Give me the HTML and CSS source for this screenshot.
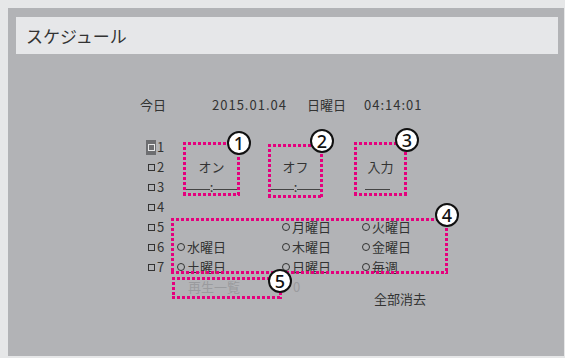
FILE: index.html
```html
<!DOCTYPE html>
<html lang="ja">
<head>
  <meta charset="UTF-8" />
  <meta name="viewport" content="width=device-width,initial-scale=1.0" />
  <title>スケジュール</title>
  <link rel="stylesheet" href="styles.css">
</head>
<body>
  <div class="panel">
    <div class="titlebar">スケジュール</div>

    <div class="today">
      <span>今日</span>
      <span class="num">2015.01.04</span>
      <span>日曜日</span>
      <span class="num">04:14:01</span>
    </div>

    <div class="sched">
      <ul class="slots">
        <li class="on"><i></i>1</li>
        <li><i></i>2</li>
        <li><i></i>3</li>
        <li><i></i>4</li>
        <li><i></i>5</li>
        <li><i></i>6</li>
        <li><i></i>7</li>
      </ul>

      <div class="detail">
        <div class="fields">
          <div class="field f1">
            <span>オン</span>
            <span class="time"><i></i>:<i></i></span>
          </div>
          <div class="field f2">
            <span>オフ</span>
            <span class="time"><i></i>:<i></i></span>
          </div>
          <div class="field f3">
            <span>入力</span>
            <span class="time"><i></i></span>
          </div>
        </div>

        <div class="days">
          <span></span>
          <span class="day">月曜日</span>
          <span class="day">火曜日</span>
          <span class="day">水曜日</span>
          <span class="day">木曜日</span>
          <span class="day">金曜日</span>
          <span class="day">土曜日</span>
          <span class="day">日曜日</span>
          <span class="day">毎週</span>
        </div>

        <div class="foot">
          <span class="muted list">再生一覧</span>
          <span class="muted count">0</span>
          <span class="clear">全部消去</span>
        </div>
      </div>
    </div>

    <!-- callouts -->
    <div class="mark m1"></div>
    <div class="mark m2"></div>
    <div class="mark m3"></div>
    <div class="mark m4"></div>
    <div class="mark m5"></div>
    <div class="badge b1">1</div>
    <div class="badge b2">2</div>
    <div class="badge b3">3</div>
    <div class="badge b4">4</div>
    <div class="badge b5">5</div>
  </div>
</body>
</html>
```

FILE: styles.css
```css
body{
  margin:0;
  background:#e6e7e8;
  font-family:"Noto Sans CJK JP","Noto Sans",sans-serif;
  color:#333;
}
.panel{
  position:relative;box-sizing:border-box;
  margin:8px 1px 0 8px;height:348px;padding-top:9px;
  background:#b2b3b6;overflow:hidden;
}
.titlebar{
  margin:0 6px 0 8px;height:37px;padding-left:10px;
  background:#e6e7e9;font-size:17px;line-height:37px;
}

/* ---------- today ---------- */
.today{
  display:grid;grid-template-columns:72px 95px 57px auto;
  margin:41px 0 0 132px;font-size:13px;line-height:20px;
}
.num{letter-spacing:1px;}

/* ---------- schedule ---------- */
.sched{display:flex;margin:22px 0 0 138px;font-size:13px;line-height:20px;}
.slots{list-style:none;margin:0;padding:0;width:31px;}
.slots li{display:flex;align-items:center;height:20px;}
.slots i{
  display:flex;align-items:center;justify-content:center;
  width:10px;height:15px;margin-right:1px;
}
.slots i::before{
  content:"";width:7px;height:7px;box-sizing:border-box;
  border:1.5px solid #333;
}
.slots li.on i{background:#6d6e71;}
.slots li.on i::before{border-color:#e6e7e8;}

.fields{display:flex;margin:20px 0 20px 6px;}
.field{display:flex;flex-direction:column;align-items:center;}
.f1{width:57px;}
.f2{width:55px;margin-left:28px;}
.f3{width:53px;margin-left:31px;}
.time{display:flex;align-items:center;justify-content:center;width:100%;height:20px;}
.time i{flex:1;height:4px;border-bottom:1px solid #444;}
.f3 .time i{flex:none;width:25px;margin-left:-6px;}

.days,.foot{display:grid;grid-template-columns:105px 80px auto;grid-auto-rows:20px;}
.day{display:flex;align-items:center;}
.day::before{
  content:"";width:8px;height:8px;box-sizing:border-box;
  border:1.3px solid #333;border-radius:50%;margin-right:2px;
}
.muted{color:#9a9b9e;}
.list,.count{padding-left:11px;}
.clear{padding-left:12px;margin-top:12px;}

/* ---------- callouts ---------- */
.mark{
  position:absolute;box-sizing:border-box;
  --dots-h:repeating-linear-gradient(90deg,#e5007d 0 3px,transparent 3px 5px);
  --dots-v:repeating-linear-gradient(180deg,#e5007d 0 3px,transparent 3px 5px);
  background:
    var(--dots-h) left top/100% 3px no-repeat,
    var(--dots-h) left bottom/100% 3px no-repeat,
    var(--dots-v) left top/3px 100% no-repeat,
    var(--dots-v) right top/3px 100% no-repeat;
}
.m1{left:175px;top:134px;width:57px;height:54px;}
.m2{left:260px;top:136px;width:55px;height:54px;}
.m3{left:346px;top:134px;width:53px;height:54px;}
.m4{left:163px;top:210px;width:277px;height:56px;}
.m5{left:164px;top:269px;width:110px;height:22px;}
.badge{
  position:absolute;box-sizing:border-box;width:24px;height:24px;
  border:2px solid #111;border-radius:50%;background:#fff;color:#111;
  font:500 18px/20px "Noto Sans",sans-serif;text-align:center;
}
.b1{left:219px;top:123px;}
.b2{left:302px;top:121px;}
.b3{left:387px;top:120px;}
.b4{left:427px;top:195px;}
.b5{left:260px;top:261px;}
```
